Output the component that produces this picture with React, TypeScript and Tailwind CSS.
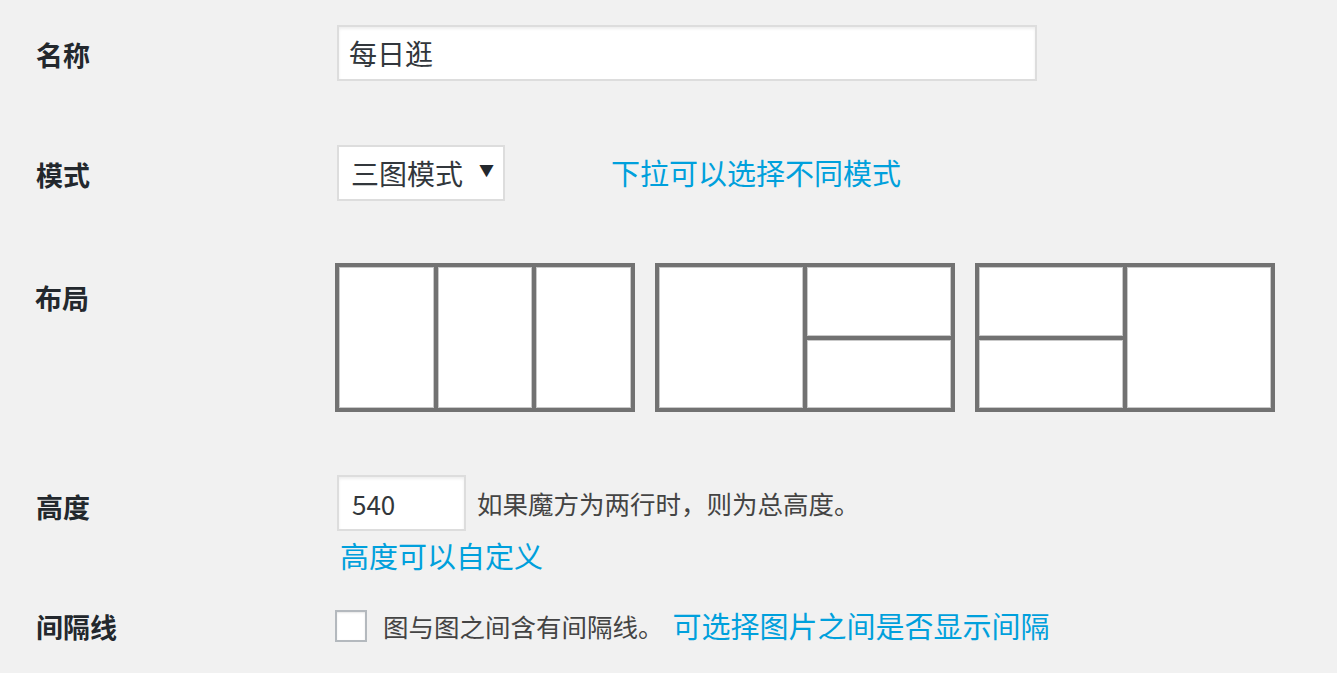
import type { ReactNode } from 'react'

const FONT = { fontFamily: '"Noto Sans CJK SC", "Noto Sans", sans-serif' }

type RowProps = {
  label: string
  children: ReactNode
  className?: string
  labelClass?: string
}

const Row = ({ label, children, className, labelClass }: RowProps) => (
  <div className={`flex ${className || ''}`}>
    <div
      className={`w-[301px] shrink-0 text-[27px] font-bold text-[#23282d] leading-none ${labelClass || 'self-center'}`}
    >
      {label}
    </div>
    <div className="flex-1">{children}</div>
  </div>
)

const Cell = () => (
  <div className="flex-1 bg-white shadow-[inset_0_0_0_1px_#c9c9c9]" />
)

const LayoutBox = ({ variant }: { variant: number }) => (
  <div className="w-[300px] h-[149px] border-4 border-[#727272] bg-[#727272] flex gap-[4px]">
    {variant === 0 && (
      <>
        <Cell />
        <Cell />
        <Cell />
      </>
    )}
    {variant === 1 && (
      <>
        <Cell />
        <div className="flex-1 flex flex-col gap-[4px]">
          <Cell />
          <Cell />
        </div>
      </>
    )}
    {variant === 2 && (
      <>
        <div className="flex-1 flex flex-col gap-[4px]">
          <Cell />
          <Cell />
        </div>
        <Cell />
      </>
    )}
  </div>
)

export default function App() {
  return (
    <div className="min-h-[673px] bg-[#f1f1f1] pl-[36px] pt-[25px]" style={FONT}>
      <Row label="名称" labelClass="self-center mt-[2px]">
        <div className="w-[700px] h-[56px] border-2 border-[#dddddd] bg-white shadow-[inset_0_2px_3px_rgba(0,0,0,0.07)] flex items-center pl-[10px] text-[28px] text-[#32373c]">
          每日逛
        </div>
      </Row>

      <Row label="模式" className="mt-[64px]" labelClass="self-center mt-[2px]">
        <div className="flex items-center">
          <div className="w-[168px] h-[56px] border-2 border-[#dddddd] bg-white flex items-center pl-[12px] text-[28px] text-[#32373c]">
            <span>三图模式</span>
            <span className="ml-[16px] text-[15px] text-[#23282d] -mt-[6px]">▼</span>
          </div>
          <span className="ml-[106px] text-[29px] text-[#00a0dc] -mt-[1px]">下拉可以选择不同模式</span>
        </div>
      </Row>

      <Row label="布局" className="mt-[62px]" labelClass="pt-[21px] -ml-px">
        <div className="flex gap-[20px] -ml-[1px]">
          <LayoutBox variant={0} />
          <LayoutBox variant={1} />
          <LayoutBox variant={2} />
        </div>
      </Row>

      <div className="flex mt-[63px]">
        <div className="w-[301px] shrink-0 text-[27px] font-bold text-[#23282d] leading-none pt-[18px]">
          高度
        </div>
        <div className="flex-1">
          <div className="flex items-center">
            <div className="w-[129px] h-[56px] border-2 border-[#dddddd] bg-white shadow-[inset_0_2px_3px_rgba(0,0,0,0.07)] flex items-center pl-[13px] text-[26px] text-[#32373c]">
              540
            </div>
            <span className="ml-[11px] text-[25.5px] text-[#444444]">如果魔方为两行时，则为总高度。</span>
          </div>
          <div className="mt-[10px] ml-[3px] text-[29px] leading-none text-[#00a0dc]">高度可以自定义</div>
        </div>
      </div>

      <div className="flex mt-[34px] items-center">
        <div className="w-[301px] shrink-0 text-[27px] font-bold text-[#23282d] leading-none mt-[2px]">
          间隔线
        </div>
        <div className="flex items-center -ml-[2px]">
          <div className="w-[32px] h-[32px] border-2 border-[#b4b9be] bg-white shadow-[inset_0_1px_2px_rgba(0,0,0,0.1)]" />
          <span className="ml-[16px] text-[25.5px] text-[#444444]">图与图之间含有间隔线。</span>
          <span className="ml-[9px] text-[29px] text-[#00a0dc]">可选择图片之间是否显示间隔</span>
        </div>
      </div>
    </div>
  )
}
